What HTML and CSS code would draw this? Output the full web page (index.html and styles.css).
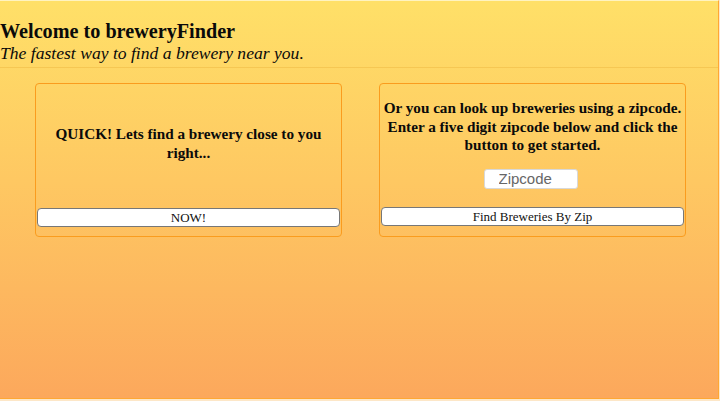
FILE: index.html
```html
<!DOCTYPE html>
<html>
<head>
<meta charset="utf-8">
<link rel="stylesheet" href="styles.css">
</head>
<body>
<div class="page">
  <header class="header">
    <h1 class="title">Welcome to breweryFinder</h1>
    <p class="subtitle">The fastest way to find a brewery near you.</p>
  </header>
  <main class="cards">
    <section class="card card-quick">
      <div class="card-text">
        <h3 class="card-heading">QUICK! Lets find a brewery close to you right...</h3>
      </div>
      <button class="btn">NOW!</button>
    </section>
    <section class="card card-zip">
      <h3 class="card-heading zip-heading">Or you can look up breweries using a zipcode. Enter a five digit zipcode below and click the button to get started.</h3>
      <div class="zip-row"><input class="zip-input" type="text" placeholder="Zipcode"></div>
      <button class="btn">Find Breweries By Zip</button>
    </section>
  </main>
</div>
</body>
</html>
```

FILE: styles.css
```css
html, body {
  margin: 0;
  padding: 0;
  background: #fde7c8;
}
body {
  font-family: "Liberation Serif", "Times New Roman", serif;
  color: #0a0a0a;
}
.page {
  box-sizing: border-box;
  width: 719px;
  height: 399px;
  background: linear-gradient(to bottom, #ffe068 0%, #fec862 45%, #fca85c 100%);
  border-right: 1px solid #ffa733;
  border-bottom: 1px solid #ffa733;
  border-top: 1px solid #fff3c0;
}
.header {
  padding-top: 19px;
  padding-bottom: 4px;
  border-bottom: 1px solid rgba(230, 170, 50, 0.35);
}
.title {
  margin: 0;
  font-size: 20.2px;
  font-weight: bold;
  line-height: 23px;
}
.subtitle {
  margin: 0;
  font-size: 17.6px;
  font-style: italic;
  line-height: 20px;
}
.cards {
  display: flex;
  gap: 37px;
  padding: 15px 0 0 35px;
}
.card {
  box-sizing: border-box;
  flex: 0 0 307px;
  height: 154px;
  border: 1px solid #fa9c1e;
  border-radius: 4px;
  display: flex;
  flex-direction: column;
  padding: 0 1px 9px;
}
.card-text {
  flex: 1;
  display: flex;
  align-items: center;
  justify-content: center;
  padding: 0 0 6px;
}
.card-heading {
  margin: 0;
  font-size: 15.2px;
  font-weight: bold;
  text-align: center;
  line-height: 19px;
}
.zip-heading {
  margin-top: 15px;
  line-height: 18.5px;
}
.zip-row {
  display: flex;
  justify-content: center;
  margin-top: 14px;
  margin-bottom: 18px;
}
.zip-input {
  box-sizing: border-box;
  width: 94px;
  height: 20px;
  border: 1px solid #d8d8d8;
  border-radius: 3px;
  background: #fff;
  padding: 0 0 0 14px;
  font-family: "Liberation Sans", Arial, sans-serif;
  font-size: 15px;
  outline: none;
  margin-right: 4px;
}
.zip-input::placeholder {
  color: #666;
}
.btn {
  box-sizing: border-box;
  width: 100%;
  height: 19px;
  background: #fff;
  border: 1px solid #777;
  border-radius: 4px;
  font-family: "Liberation Serif", "Times New Roman", serif;
  font-size: 13px;
  color: #111;
  padding: 0;
  line-height: 17px;
}
.card-quick .btn {
  margin-top: 1px;
}
```
